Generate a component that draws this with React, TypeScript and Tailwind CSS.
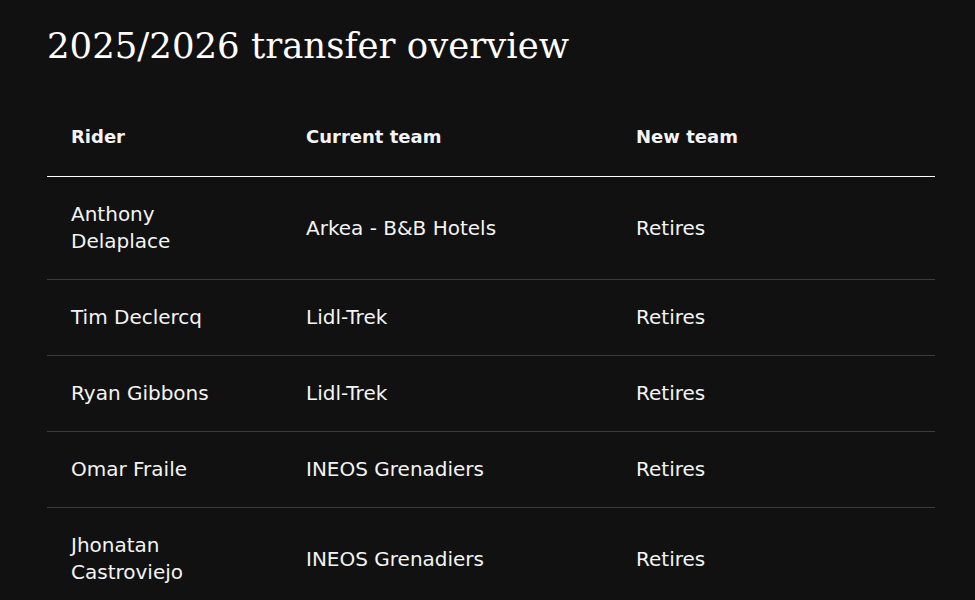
import React from "react"

const rows = [
  { rider: "Anthony Delaplace", current: "Arkea - B&B Hotels", next: "Retires" },
  { rider: "Tim Declercq", current: "Lidl-Trek", next: "Retires" },
  { rider: "Ryan Gibbons", current: "Lidl-Trek", next: "Retires" },
  { rider: "Omar Fraile", current: "INEOS Grenadiers", next: "Retires" },
  { rider: "Jhonatan Castroviejo", current: "INEOS Grenadiers", next: "Retires" },
]

const App: React.FC = () => {
  return (
    <div className="min-h-screen bg-[#111111] text-[#f4f4f4] px-[47px] pt-[22px] pb-10">
      <h1 className="font-['DejaVu_Serif',serif] text-[35.5px] leading-[48px] text-white">
        2025/2026 transfer overview
      </h1>

      <table className="mt-[26px] w-[888px] table-fixed border-collapse font-['DejaVu_Sans',sans-serif] text-[20px] leading-[27px]">
        <thead>
          <tr className="border-b border-white text-left text-[18px]">
            <th className="w-[235px] px-6 pt-[27px] pb-[26px] font-bold">Rider</th>
            <th className="w-[330px] px-6 pt-[27px] pb-[26px] font-bold">Current team</th>
            <th className="px-6 pt-[27px] pb-[26px] font-bold">New team</th>
          </tr>
        </thead>
        <tbody>
          {rows.map((row) => (
            <tr key={row.rider} className="border-b border-[#3c3c3c]">
              <td className="px-6 py-6 align-middle">{row.rider}</td>
              <td className="px-6 py-6 align-middle">{row.current}</td>
              <td className="px-6 py-6 align-middle">{row.next}</td>
            </tr>
          ))}
        </tbody>
      </table>
    </div>
  )
}

export default App
